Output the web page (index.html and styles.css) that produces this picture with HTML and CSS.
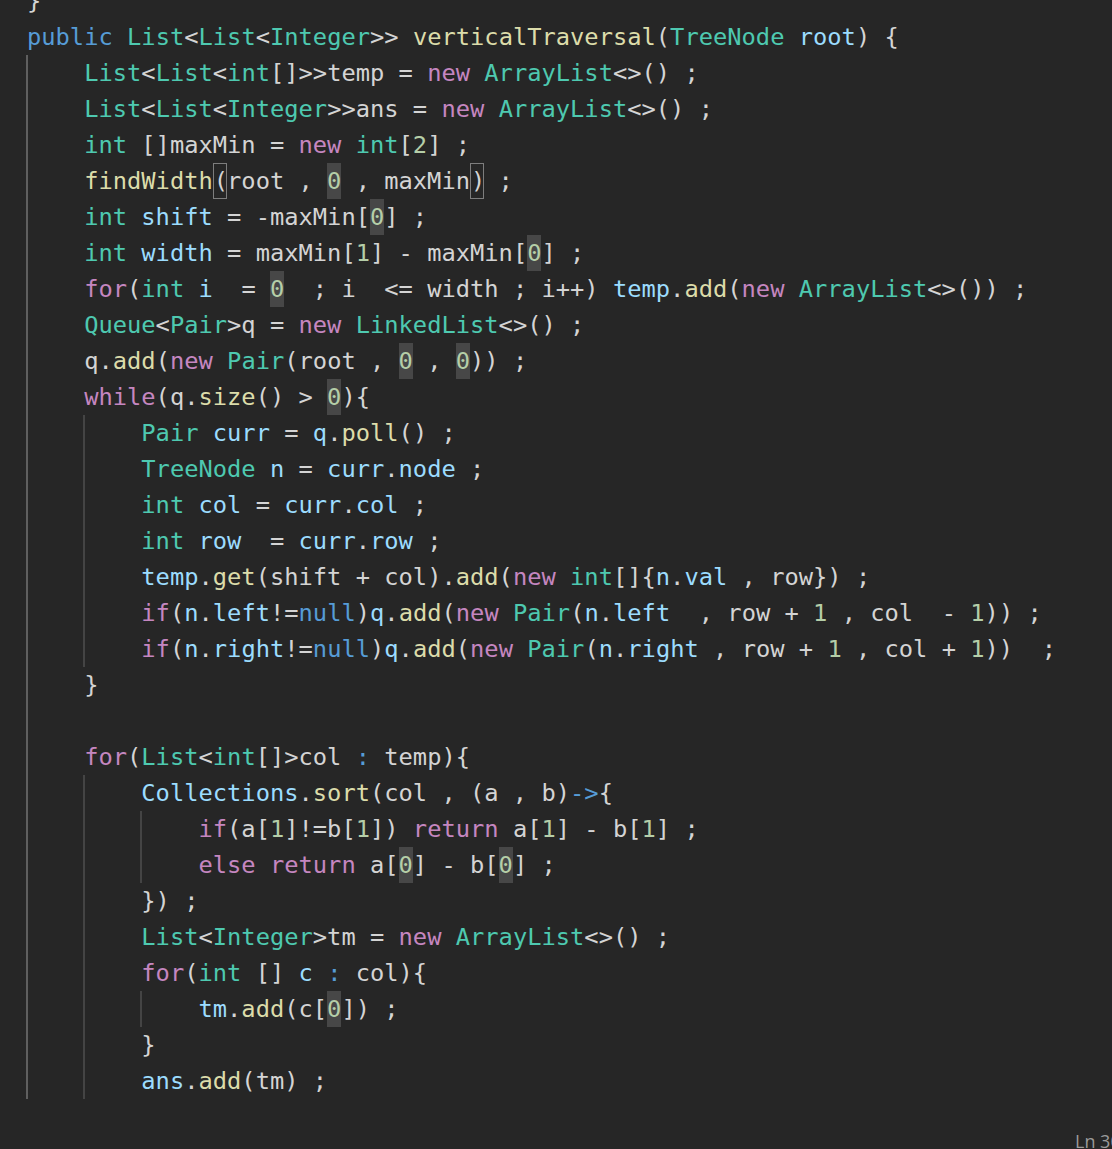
FILE: index.html
```html
<!DOCTYPE html>
<html lang="en">
<head>
<meta charset="utf-8">
<title>verticalTraversal</title>
<link rel="stylesheet" href="styles.css">
</head>
<body>
<main class="editor">
  <div class="line">}</div>
  <div class="line"><span class="k">public</span> <span class="t">List</span>&lt;<span class="t">List</span>&lt;<span class="t">Integer</span>&gt;&gt; <span class="f">verticalTraversal</span>(<span class="t">TreeNode</span> <span class="v">root</span>) {</div>
  <div class="block active">
    <div class="line"><span class="t">List</span>&lt;<span class="t">List</span>&lt;<span class="t">int</span>[]&gt;&gt;temp = <span class="c">new</span> <span class="t">ArrayList</span>&lt;&gt;() ;</div>
    <div class="line"><span class="t">List</span>&lt;<span class="t">List</span>&lt;<span class="t">Integer</span>&gt;&gt;ans = <span class="c">new</span> <span class="t">ArrayList</span>&lt;&gt;() ;</div>
    <div class="line"><span class="t">int</span> []maxMin = <span class="c">new</span> <span class="t">int</span>[<span class="n">2</span>] ;</div>
    <div class="line"><span class="f">findWidth</span><span class="bm">(</span>root , <span class="z">0</span> , maxMin<span class="bm">)</span> ;</div>
    <div class="line"><span class="t">int</span> <span class="v">shift</span> = -maxMin[<span class="z">0</span>] ;</div>
    <div class="line"><span class="t">int</span> <span class="v">width</span> = maxMin[<span class="n">1</span>] - maxMin[<span class="z">0</span>] ;</div>
    <div class="line"><span class="c">for</span>(<span class="t">int</span> <span class="v">i</span>  = <span class="z">0</span>  ; i  &lt;= width ; i++) <span class="v">temp</span>.<span class="f">add</span>(<span class="c">new</span> <span class="t">ArrayList</span>&lt;&gt;()) ;</div>
    <div class="line"><span class="t">Queue</span>&lt;<span class="t">Pair</span>&gt;q = <span class="c">new</span> <span class="t">LinkedList</span>&lt;&gt;() ;</div>
    <div class="line">q.<span class="f">add</span>(<span class="c">new</span> <span class="t">Pair</span>(root , <span class="z">0</span> , <span class="z">0</span>)) ;</div>
    <div class="line"><span class="c">while</span>(q.<span class="f">size</span>() &gt; <span class="z">0</span>){</div>
    <div class="block">
      <div class="line"><span class="t">Pair</span> <span class="v">curr</span> = <span class="v">q</span>.<span class="f">poll</span>() ;</div>
      <div class="line"><span class="t">TreeNode</span> <span class="v">n</span> = <span class="v">curr</span>.<span class="v">node</span> ;</div>
      <div class="line"><span class="t">int</span> <span class="v">col</span> = <span class="v">curr</span>.<span class="v">col</span> ;</div>
      <div class="line"><span class="t">int</span> <span class="v">row</span>  = <span class="v">curr</span>.<span class="v">row</span> ;</div>
      <div class="line"><span class="v">temp</span>.<span class="f">get</span>(shift + col).<span class="f">add</span>(<span class="c">new</span> <span class="t">int</span>[]{<span class="v">n</span>.<span class="v">val</span> , row}) ;</div>
      <div class="line"><span class="c">if</span>(<span class="v">n</span>.<span class="v">left</span>!=<span class="k">null</span>)<span class="v">q</span>.<span class="f">add</span>(<span class="c">new</span> <span class="t">Pair</span>(<span class="v">n</span>.<span class="v">left</span>  , row + <span class="n">1</span> , col  - <span class="n">1</span>)) ;</div>
      <div class="line"><span class="c">if</span>(<span class="v">n</span>.<span class="v">right</span>!=<span class="k">null</span>)<span class="v">q</span>.<span class="f">add</span>(<span class="c">new</span> <span class="t">Pair</span>(<span class="v">n</span>.<span class="v">right</span> , row + <span class="n">1</span> , col + <span class="n">1</span>))  ;</div>
    </div>
    <div class="line">}</div>
    <div class="line"> </div>
    <div class="line"><span class="c">for</span>(<span class="t">List</span>&lt;<span class="t">int</span>[]&gt;col <span class="k">:</span> temp){</div>
    <div class="block">
      <div class="line"><span class="v">Collections</span>.<span class="f">sort</span>(col , (a , b)<span class="k">-&gt;</span>{</div>
      <div class="block">
        <div class="line"><span class="c">if</span>(a[<span class="n">1</span>]!=b[<span class="n">1</span>]) <span class="c">return</span> a[<span class="n">1</span>] - b[<span class="n">1</span>] ;</div>
        <div class="line"><span class="c">else</span> <span class="c">return</span> a[<span class="z">0</span>] - b[<span class="z">0</span>] ;</div>
      </div>
      <div class="line">}) ;</div>
      <div class="line"><span class="t">List</span>&lt;<span class="t">Integer</span>&gt;tm = <span class="c">new</span> <span class="t">ArrayList</span>&lt;&gt;() ;</div>
      <div class="line"><span class="c">for</span>(<span class="t">int</span> [] <span class="v">c</span> <span class="k">:</span> col){</div>
      <div class="block">
        <div class="line"><span class="v">tm</span>.<span class="f">add</span>(c[<span class="z">0</span>]) ;</div>
      </div>
      <div class="line">}</div>
      <div class="line"><span class="v">ans</span>.<span class="f">add</span>(tm) ;</div>
    </div>
  </div>
</main>
<div class="status">Ln 30, Col 1</div>
</body>
</html>
```
FILE: styles.css
```css
html, body {
  margin: 0;
  padding: 0;
  background: #262626;
  overflow: hidden;
  height: 100%;
}

body {
  position: relative;
}

.editor {
  margin-top: -17px;
  padding-left: 27px;
  font-family: "DejaVu Sans Mono", "Liberation Mono", monospace;
  font-size: 23.74px;
  color: #d4d4d4;
}

.line {
  height: 36px;
  line-height: 36px;
  white-space: pre;
}

.block {
  margin-left: -1px;
  padding-left: calc(4ch - 1px);
  border-left: 2px solid #444444;
}

.block.active {
  border-left-color: #5f5f5f;
}

.k { color: #569cd6; }
.t { color: #4ec9b0; }
.f { color: #dcdcaa; }
.c { color: #c586c0; }
.v { color: #9cdcfe; }
.n { color: #b5cea8; }

.z {
  display: inline-block;
  width: 1ch;
  height: 36px;
  line-height: 36px;
  vertical-align: top;
  background: #474747;
  color: #b5cea8;
}

.bm {
  display: inline-block;
  box-sizing: border-box;
  width: 1ch;
  height: 36px;
  line-height: 34px;
  vertical-align: top;
  border: 1px solid #7d7d7d;
}

.status {
  position: absolute;
  left: 1075px;
  top: 1130px;
  font-family: "Open Sans", "Noto Sans", sans-serif;
  font-size: 18px;
  line-height: 22px;
  color: #9a9a9a;
  white-space: nowrap;
}
```
